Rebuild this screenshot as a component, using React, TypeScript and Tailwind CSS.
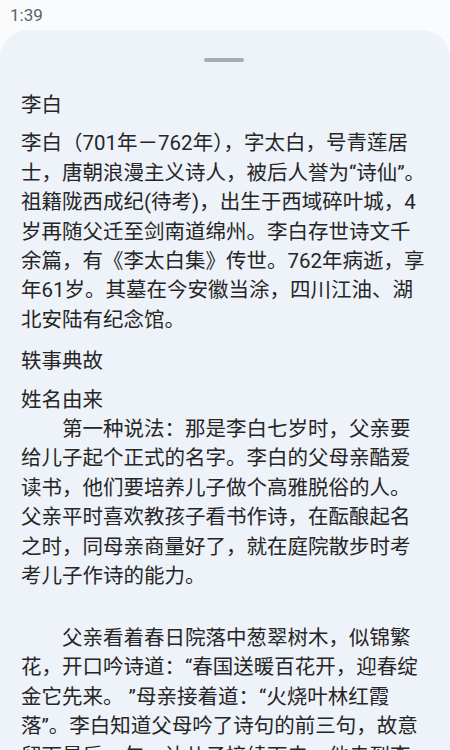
const bio =
  '李白（701年－762年），字太白，号青莲居士，唐朝浪漫主义诗人，被后人誉为“诗仙”。祖籍陇西成纪(待考)，出生于西域碎叶城，4岁再随父迁至剑南道绵州。李白存世诗文千余篇，有《李太白集》传世。762年病逝，享年61岁。其墓在今安徽当涂，四川江油、湖北安陆有纪念馆。';

const origin =
  '姓名由来\n\u3000\u3000第一种说法：那是李白七岁时，父亲要给儿子起个正式的名字。李白的父母亲酷爱读书，他们要培养儿子做个高雅脱俗的人。父亲平时喜欢教孩子看书作诗，在酝酿起名之时，同母亲商量好了，就在庭院散步时考考儿子作诗的能力。\n ';

const story =
  '\u3000\u3000父亲看着春日院落中葱翠树木，似锦繁花，开口吟诗道：“春国送暖百花开，迎春绽金它先来。 ”母亲接着道：“火烧叶林红霞落”。李白知道父母吟了诗句的前三句，故意留下最后一句，让儿子接续下去。他走到李花树下，';

export default function App() {
  return (
    <div
      className="h-[750px] overflow-hidden bg-[#fafbfd] text-[#262626]"
      style={{ fontFamily: 'Roboto, "Noto Sans CJK SC", sans-serif' }}
    >
      <div className="h-[30px] px-[10px] pt-[3px] text-[17px] leading-[24px] text-[#616161]">1:39</div>
      <div className="h-[720px] overflow-hidden rounded-t-[28px] bg-[#eef2f9] pl-[21px] pr-[23px] pt-[28px]">
        <div className="mx-auto h-[4px] w-[40px] rounded-full bg-[#a8acb4]" />
        <div className="text-[20.5px] leading-[29.4px]">
          <p className="mt-[29px]">李白</p>
          <p className="mt-[9px]">{bio}</p>
          <p className="mt-[12px]">轶事典故</p>
          <p className="mt-[9px] whitespace-pre-wrap">{origin}</p>
          <p className="mt-[3px] whitespace-pre-wrap">{story}</p>
        </div>
      </div>
    </div>
  );
}
